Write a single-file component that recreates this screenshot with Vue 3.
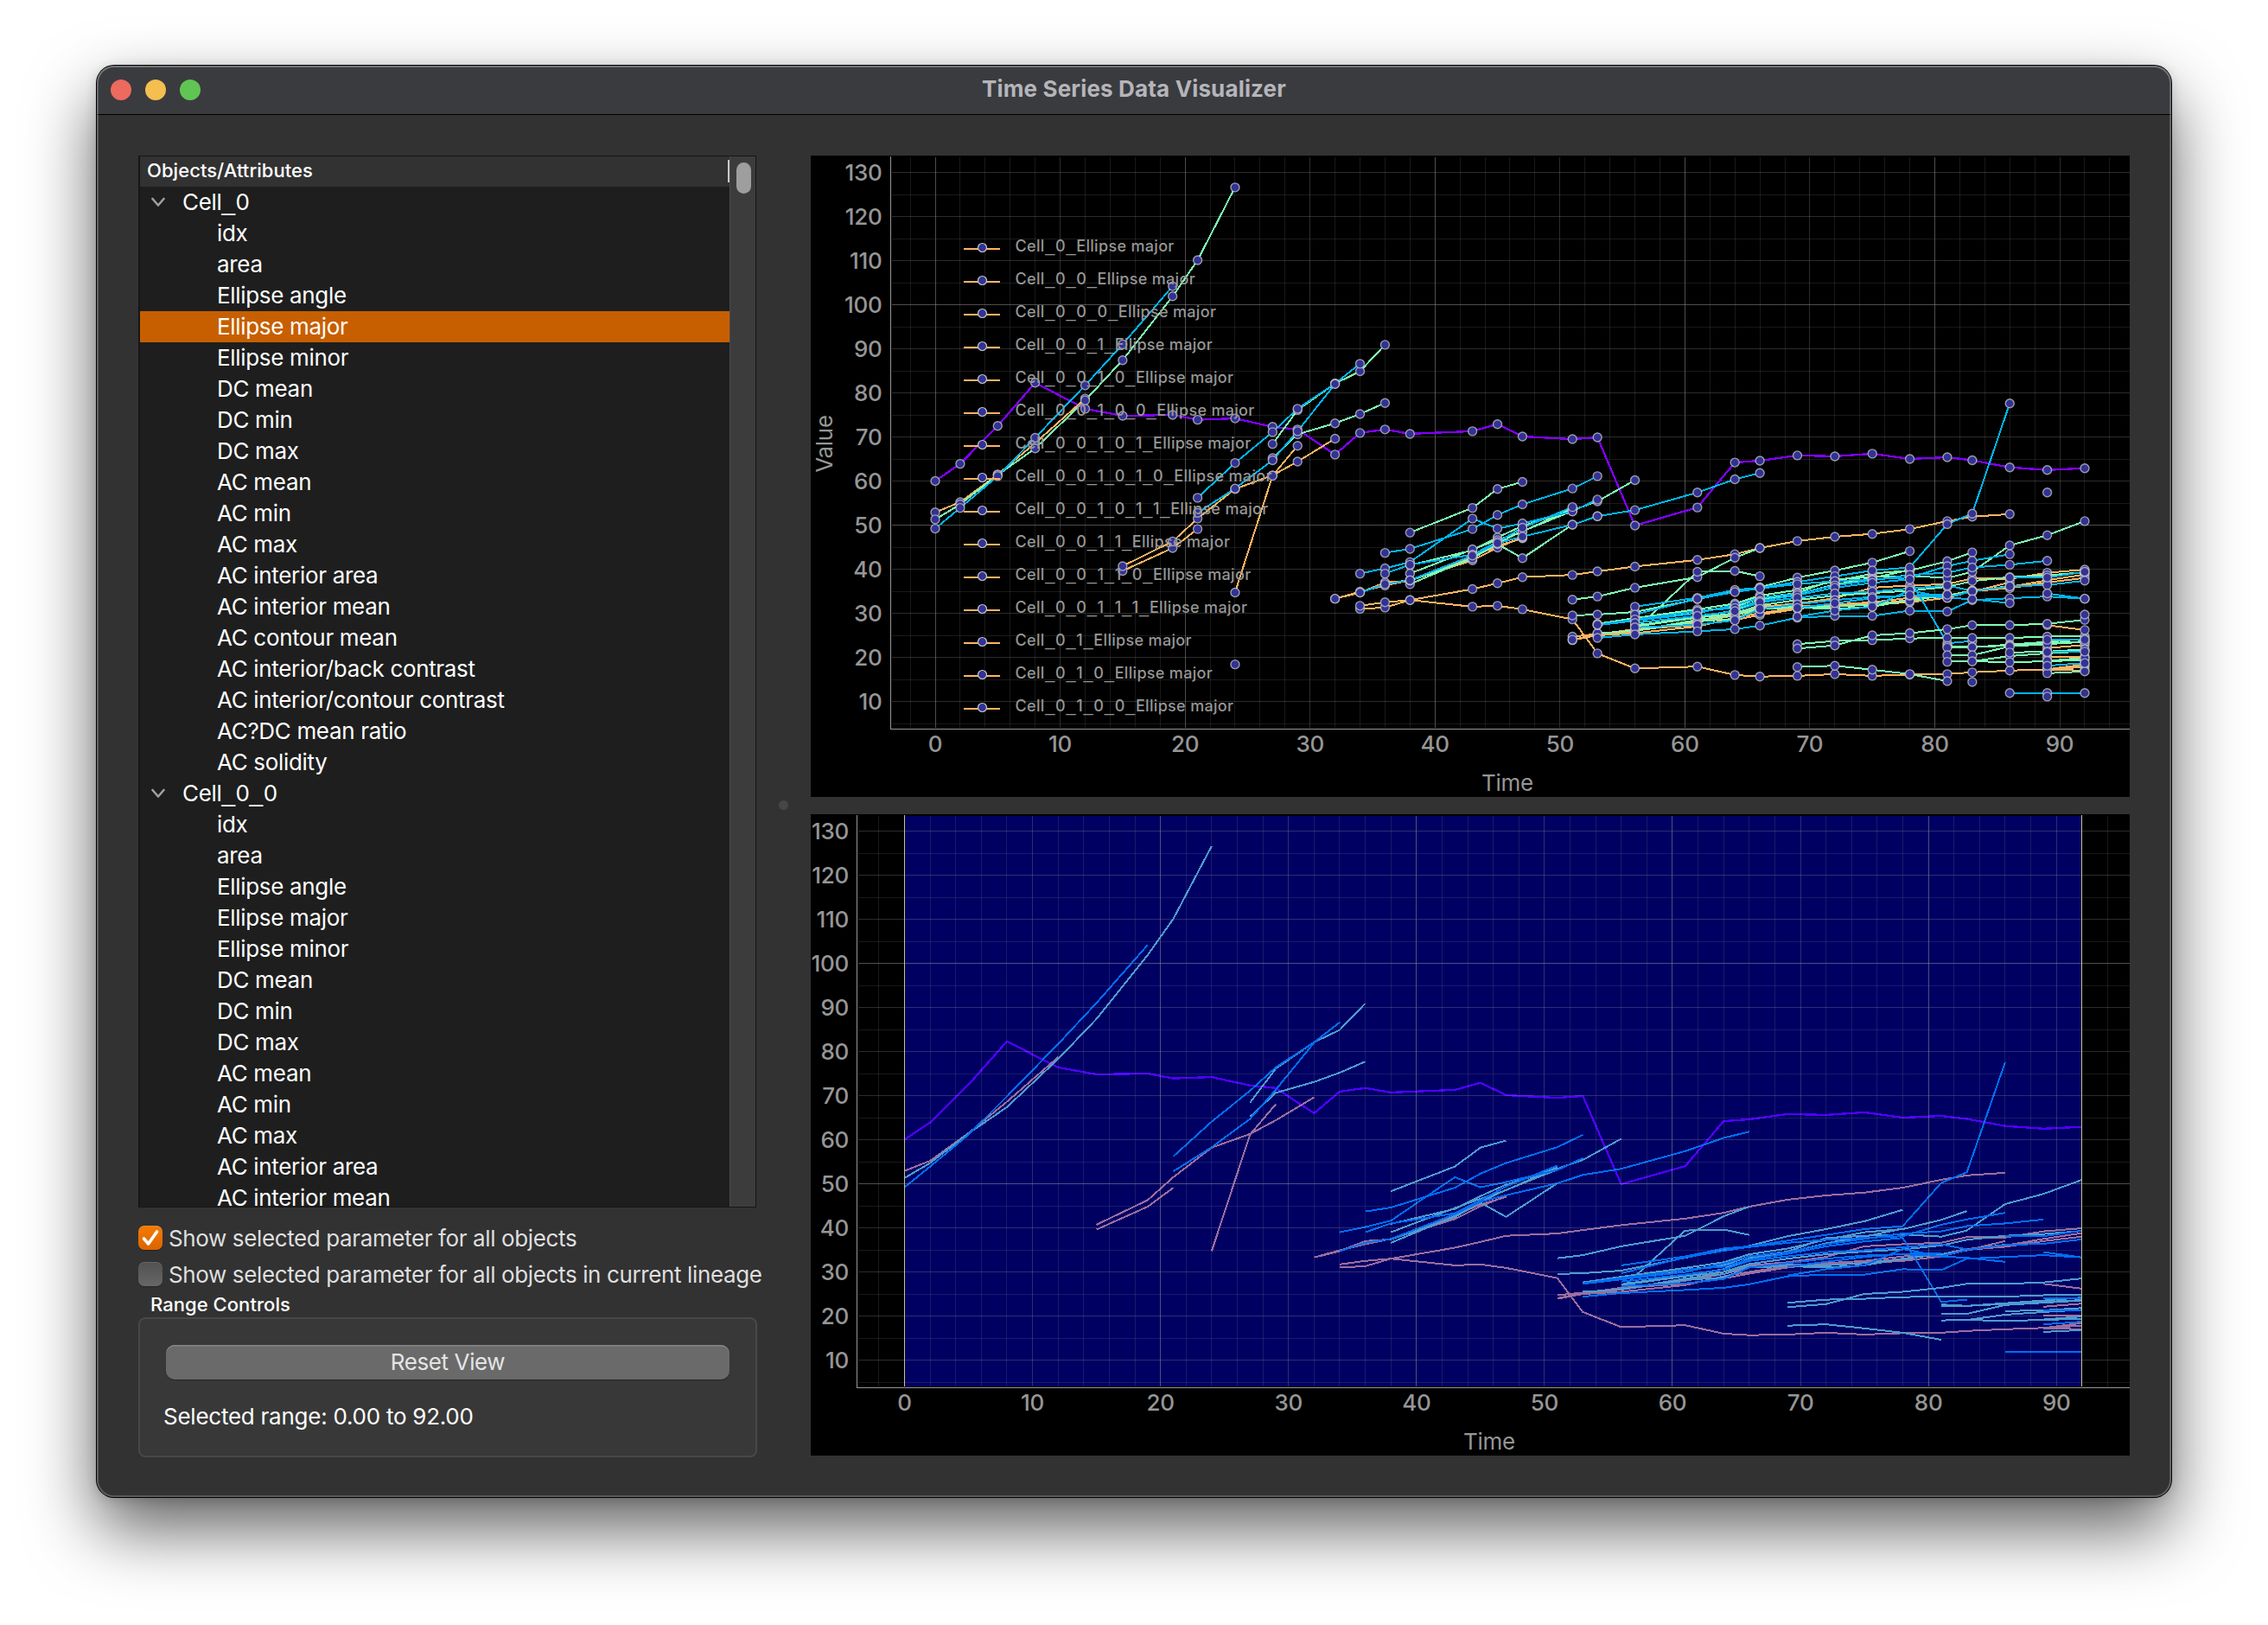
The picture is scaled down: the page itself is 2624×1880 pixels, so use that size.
<script setup>
const attributes = [
  'idx', 'area', 'Ellipse angle', 'Ellipse major', 'Ellipse minor', 'DC mean', 'DC min', 'DC max',
  'AC mean', 'AC min', 'AC max', 'AC interior area', 'AC interior mean', 'AC contour mean',
  'AC interior/back contrast', 'AC interior/contour contrast', 'AC?DC mean ratio', 'AC solidity',
]
// Underscores are set in a wider face, so names are split around them.
const pieces = (text) => text.split(/(_)/)
const rows = [
  { label: 'Cell_0', parent: true },
  ...attributes.map((label) => ({ label, selected: label === 'Ellipse major' })),
  { label: 'Cell_0_0', parent: true },
  ...attributes.slice(0, 13).map((label) => ({ label })),
]

const legend = ['0', '0_0', '0_0_0', '0_0_1', '0_0_1_0', '0_0_1_0_0', '0_0_1_0_1', '0_0_1_0_1_0',
  '0_0_1_0_1_1', '0_0_1_1', '0_0_1_1_0', '0_0_1_1_1', '0_1', '0_1_0', '0_1_0_0']
  .map((id) => `Cell_${id}_Ellipse major`)

// Acquisition frames; each series starts at one of them and continues on the following ones.
const frames = [0, 2, 5, 8, 12, 15, 19, 21, 24, 27, 29, 32, 34, 36, 38, 43, 45, 47, 51, 53, 56, 61, 64, 66, 69, 72, 75, 78, 81, 83, 86, 89, 92]
const P = '#8000ff'
const O = '#ffb462'
const G = '#80ffb4'
const B = '#00b4ec'
const raw = [
  [P, 0, [60, 63.9, 72.5, 82.3, 76.4, 74.8, 75, 73.9, 74.2, 72.3, 71.7, 66, 70.9, 71.7, 70.7, 71.3, 72.9, 70.1, 69.5, 69.9, 49.9, 54, 64.2, 64.6, 65.8, 65.6, 66.2, 65, 65.4, 64.7, 63.1, 62.5, 62.9]],
  [O, 0, [52.9, 55.2, 61.5, 68.6, 78.7]],
  [G, 0, [51.3, 54.7, 61.4, 67.4, 78.3, 87.4, 101.9, 110.1, 126.6]],
  [B, 0, [49.2, 53.9, 61.1, 69.8, 81.7, 91, 104.2]],
  [O, 15, [39.6, 44.8, 49.1]],
  [O, 15, [40.7, 46.3, 51.5, 58.2, 61.3, 64.4, 69.6]],
  [O, 24, [34.7, 61.2, 68]],
  [G, 24, [18.4]],
  [G, 27, [68.4, 76.1, 82.1, 84.9, 90.9]],
  [G, 27, [65.2, 70.6, 73.1, 75.2, 77.7]],
  [B, 21, [56.2, 64.1, 71.1, 76.4, 82.1, 86.6]],
  [B, 21, [52.8, 58.3, 64.7, 71.3, 82]],
  [O, 34, [31, 31.3, 33, 35.5, 36.8, 38.2, 38.7, 39.5, 40.6, 42.1, 43.4, 44.8, 46.4, 47.35, 48, 49.1, 50.9, 51.9, 52.5]],
  [O, 34, [31.7, 32.5, 33, 31.5, 31.7, 30.9, 28.6, 20.9, 17.5, 17.9, 16, 15.65, 15.8, 16.2, 15.8, 16.1, 16.2, 16.6, 17, 17.3, 17.8]],
  [O, 32, [33.3, 34.7, 37, 37.4, 42.8, 45.3, 47]],
  [O, 32, [33.3, 34.9, 36.3, 37.5, 42, 44.9, 47.2]],
  [G, 38, [48.3, 53.9, 58.2, 59.8]],
  [G, 38, [40.9, 44.3, 47.2, 49.8, 53.4, 55.4, 60.2]],
  [G, 38, [39, 44.5, 46.6, 48.5, 53.8]],
  [G, 38, [36.6, 42.6, 45.7, 42.5, 50.1, 52]],
  [G, 38, [37.4, 42.4, 45.9, 48.6, 53.2]],
  [B, 36, [43.7, 44.6, 49.1, 52.3, 54.7, 58.3, 61.1]],
  [B, 34, [39, 40.2, 41.6, 51.5, 49.2, 50.4, 53.1, 55.8]],
  [B, 36, [39, 41, 43.3, 46.2, 49.4, 54.1]],
  [B, 34, [34.7, 36.6, 37.5, 43.1, 45.9, 47.4, 50.1, 52, 53.4, 57.4, 60.4, 61.8]],
  [O, 51, [24.7, 25.3, 26, 28.3, 30, 31.5, 32.2, 33.4, 35.8, 36.3, 36.6, 37.9, 37.8, 39.2, 39.9]],
  [O, 51, [23.9, 25, 26, 28, 29.5, 31, 31.7, 31.6, 32.1, 33, 34, 35.2, 36, 37.5, 38.8]],
  [O, 51, [24, 25.2, 26.4, 27.3, 28.5, 29.6, 31, 32, 32.5, 33.5, 34, 34.9, 37]],
  [O, 53, [25, 25.5, 27, 29, 30, 31.3, 31.5, 32, 32.5, 33.5, 35, 35.7, 37, 38]],
  [G, 51, [33.1, 33.8, 35.8, 38.2, 42.6, 44.8]],
  [G, 56, [26.2, 39.4, 39.6, 38.4]],
  [G, 51, [29.5, 29.7, 30.3, 33.2, 35, 35.9, 38.1, 39.7, 41.5, 44.1]],
  [G, 53, [27.6, 28.9, 30.9, 32.2, 34, 35.3, 37.3, 39, 39.7, 41.8, 43.8]],
  [G, 56, [28.3, 30.5, 31.5, 33.5, 34.6, 37.7, 38.2, 38.5, 38, 39.4, 45.4, 47.7, 50.9]],
  [G, 56, [27.2, 29.2, 30.6, 33.1, 34.4, 36.5, 38, 39.8]],
  [G, 53, [25.5, 26, 28.2, 28.7, 31, 31.3, 31, 31.5, 33, 34, 35, 36.2]],
  [G, 56, [26, 28.5, 29.5, 31.3, 31.5, 31.5, 32, 32.8, 34.2]],
  [G, 56, [27, 29, 30, 31.8, 33, 34, 34.6, 35.1, 36, 37.3, 38.2, 38.6, 39.3]],
  [B, 56, [31.5, 33.5, 35.3, 35.8, 37.1, 38.4, 39.7, 40.4, 50.2, 52.6, 77.6]],
  [B, 56, [29.7, 33.3, 34.8, 35.65, 36.6, 37.3, 37.7, 38.1, 40.7, 41.9, 43.4]],
  [B, 53, [27.3, 28.3, 30, 31.9, 33.5, 34.5, 36.3, 37.5, 38.7, 39.2, 40.4, 41, 41.9]],
  [B, 53, [27.4, 28.6, 30.5, 31.2, 32.8, 34.1, 35.8, 36.9, 37.7, 23.2, 23.7]],
  [B, 56, [27.8, 29.4, 30.5, 32.5, 33.5, 34.5, 34.9, 35.6, 36.3, 35.1]],
  [B, 56, [26.8, 27.4, 28.4, 31, 32, 33, 33.7, 34, 33.6, 35, 36.1, 36.4, 37.4]],
  [B, 53, [24.4, 25.2, 25.9, 26.4, 27.2, 29, 29.4, 29.4, 30.6, 30.4, 33, 33.4, 33.8, 33.3]],
  [B, 69, [29.2, 30.6, 31.5, 35.2, 33.5, 33.2, 32.3]],
  [B, 69, [31.2, 32.3, 33.4, 34.1, 34.2]],
  [B, 89, [34.5, 33.3]],
  [B, 86, [38.1, 38.1, 39.4]],
  [G, 89, [57.4]],
  [G, 69, [23, 23.7, 23.9, 24.3, 24.4, 24.4, 24.4, 24.7, 24.8]],
  [O, 89, [27.3, 26.2]],
  [G, 69, [22, 22.7, 25, 25.5, 26.4, 27.3, 27.3, 27.6, 28.5]],
  [G, 92, [29.7]],
  [G, 69, [17.8, 18.1, 17.2, 16.2, 14.6]],
  [G, 83, [14.4]],
  [O, 89, [22.1, 22.8]],
  [O, 89, [20, 20.2]],
  [O, 89, [17.3, 18.4]],
  [O, 89, [17.2, 17]],
  [G, 81, [22.6, 22.3, 22.9, 23.5, 24.2]],
  [G, 81, [22.2, 22.3, 22.7, 23.2, 23.6]],
  [G, 81, [20.5, 20.5, 22.5, 23, 23.5]],
  [G, 81, [19, 19.1, 20.3, 20.9, 21.4]],
  [G, 83, [19.1, 18.9, 19.1, 19.4]],
  [G, 86, [21.1, 21.3, 21.8]],
  [G, 89, [19.2, 19.9]],
  [G, 89, [16.4, 16.8]],
  [B, 89, [24, 24]],
  [B, 89, [21.2, 21.3]],
  [B, 89, [18.1, 18.7]],
  [B, 86, [11.9, 11.9, 11.9]],
  [G, 89, [11.1]],
]
const series = raw.map(([color, start, values]) => {
  const first = frames.indexOf(start)
  return { color, points: values.map((v, i) => [frames[first + i], v]) }
})

const W = 1526
const H = 742
const sy = (v) => 682.5 - 5.1 * v
const makeScale = (x0, unit) => (t) => x0 + unit * t
const snap = (n) => Math.floor(n) + 0.5
const charts = [
  { id: 'main', axis: 92.5, sx: makeScale(144, 14.456), timeX: 806, labelX: 82.5, main: true },
  { id: 'range', axis: 53.5, sx: makeScale(108.5, 14.808), timeX: 785, labelX: 44 },
].map((c) => {
  const grid = []
  for (let t = -4; t <= 96; t += 2) {
    const x = snap(c.sx(t))
    if (x > c.axis + 1 && x < W) grid.push({ x1: x, x2: x, y1: 2, y2: 662, level: t % 20 === 0 ? 3 : t % 10 === 0 ? 2 : 1 })
  }
  for (let v = 5; v <= 130; v += 5) {
    const y = snap(sy(v))
    grid.push({ x1: c.axis + 1.5, x2: W, y1: y, y2: y, level: v % 50 === 0 ? 3 : v % 10 === 0 ? 2 : 1 })
  }
  return {
    ...c,
    grid,
    lines: series.filter((s) => s.points.length > 1).map((s) => ({
      color: s.color,
      points: s.points.map(([t, v]) => `${c.sx(t).toFixed(1)},${sy(v).toFixed(1)}`).join(' '),
    })),
    dots: c.main ? series.flatMap((s) => s.points.map(([t, v]) => [c.sx(t), sy(v)])) : [],
  }
})
const xTicks = [0, 10, 20, 30, 40, 50, 60, 70, 80, 90]
const yTicks = [10, 20, 30, 40, 50, 60, 70, 80, 90, 100, 110, 120, 130]
</script>

<template>
  <div class="desktop">
    <main class="window">
      <header class="titlebar">
        <div class="lights"><i class="red"></i><i class="yellow"></i><i class="green"></i></div>
        <h1>Time Series Data Visualizer</h1>
      </header>
      <div class="content">
        <aside class="sidebar">
          <section class="tree">
            <div class="tree-main">
              <div class="tree-head"><span>Objects/Attributes</span><i></i></div>
              <ul>
                <li v-for="(row, i) in rows" :key="i" :class="{ parent: row.parent, selected: row.selected }">
                  <svg v-if="row.parent" width="16" height="12" viewBox="0 0 16 12"><path d="M1.5 2 8 9.5 14.5 2" /></svg>
                  <span><span v-for="(s, k) in pieces(row.label)" :key="k" :class="{ under: s === '_' }">{{ s }}</span></span>
                </li>
              </ul>
            </div>
            <div class="scrollbar"><i></i></div>
          </section>
          <label class="check on">
            <span class="box"><svg viewBox="0 0 28 28"><path d="M6.5 15 11.7 21 21.5 7" /></svg></span>
            <span>Show selected parameter for all objects</span>
          </label>
          <label class="check">
            <span class="box"></span>
            <span>Show selected parameter for all objects in current lineage</span>
          </label>
          <h2>Range Controls</h2>
          <section class="group">
            <button>Reset View</button>
            <p>Selected range: 0.00 to 92.00</p>
          </section>
        </aside>
        <div class="splitter"><i></i></div>
        <section class="plots">
          <svg v-for="c in charts" :key="c.id" class="chart" :class="c.id" :width="W" :height="H" :viewBox="`0 0 ${W} ${H}`">
            <g v-if="c.main" class="grid">
              <line v-for="(g, i) in c.grid" :key="i" :class="`g${g.level}`" :x1="g.x1" :x2="g.x2" :y1="g.y1" :y2="g.y2" />
            </g>
            <g class="curves">
              <polyline v-for="(l, i) in c.lines" :key="i" :points="l.points" :stroke="l.color" :class="{ bold: i === 0 }" />
            </g>
            <g v-if="!c.main">
              <rect class="region" x="108.5" y="2" width="1362.5" height="660" />
              <g class="grid">
                <line v-for="(g, i) in c.grid" :key="i" :class="`g${g.level}`" :x1="g.x1" :x2="g.x2" :y1="g.y1" :y2="g.y2" />
              </g>
              <path class="bounds" d="M108.5 1V662M1470.5 1V662" />
            </g>
            <g class="dots">
              <circle v-for="(d, i) in c.dots" :key="i" :cx="d[0]" :cy="d[1]" r="5" />
            </g>
            <path class="axes" :d="`M${c.axis} 1V663.5H${W}`" />
            <g class="ticks">
              <text v-for="v in yTicks" :key="v" :x="c.labelX" :y="sy(v) + 9" text-anchor="end">{{ v }}</text>
              <text v-for="t in xTicks" :key="t" :x="c.sx(t)" y="690" text-anchor="middle">{{ t }}</text>
              <text class="axis-title" :x="c.timeX" y="734.5" text-anchor="middle">Time</text>
              <text v-if="c.main" class="axis-title" transform="translate(25 333.5) rotate(-90)" text-anchor="middle">Value</text>
            </g>
            <g v-if="c.main" class="legend">
              <g v-for="(name, i) in legend" :key="name" :transform="`translate(177 ${106 + i * 38})`">
                <path d="M0 2H42" />
                <circle cx="21.5" cy="0.5" r="5" />
                <text x="59.5" y="5"><tspan v-for="(s, k) in pieces(name)" :key="k" :class="{ under: s === '_' }" :dx="s === '_' ? 0.5 : 0">{{ s }}</tspan></text>
              </g>
            </g>
          </svg>
        </section>
      </div>
    </main>
  </div>
</template>

<style>
body {
  background: #fff;
}
</style>

<style scoped>
.desktop {
  box-sizing: border-box;
  width: 2624px;
  height: 1880px;
  padding: 76px 112px 148px;
  overflow: hidden;
  background: #fff;
  font-family: Inter, 'Liberation Sans', sans-serif;
  font-size: 26px;
  letter-spacing: -0.4px;
  color: #fff;
}
.window {
  position: relative;
  display: flex;
  flex-direction: column;
  height: 1656px;
  border-radius: 20px;
  background: #323232;
  box-shadow: 0 0 0 1px #000, 0 2px 14px rgba(0, 0, 0, 0.16), 0 36px 80px rgba(0, 0, 0, 0.63);
}
.window::after {
  content: '';
  position: absolute;
  inset: 0;
  border-radius: 20px;
  box-shadow: inset 0 0 0 2px rgba(255, 255, 255, 0.2), inset 0 1px 0 1px rgba(255, 255, 255, 0.12);
  pointer-events: none;
}
.titlebar {
  display: grid;
  flex: none;
  grid-template-columns: 1fr auto 1fr;
  align-items: center;
  box-sizing: border-box;
  height: 57px;
  padding: 0 16px;
  border-bottom: 1px solid #000;
  border-radius: 20px 20px 0 0;
  background: #3a3b3f;
}
.lights {
  display: flex;
  gap: 16px;
}
.lights i {
  width: 24px;
  height: 24px;
  border-radius: 50%;
}
.red { background: #ec6a5e; }
.yellow { background: #f4bf4f; }
.green { background: #61c554; }
h1 {
  margin: 0;
  font-size: 26px;
  font-weight: 700;
  letter-spacing: 0.15px;
  color: #b5b5ba;
  line-height: 30px;
  padding-bottom: 3px;
}
.content {
  display: flex;
  flex: 1;
  padding: 47px 48px 46px;
}
.sidebar {
  display: flex;
  flex-direction: column;
  width: 715px;
}
.tree {
  display: flex;
  flex: none;
  box-sizing: border-box;
  height: 1217px;
  border: 1px solid #161616;
  border-left-width: 2px;
  background: #1e1e1e;
  overflow: hidden;
}
.tree-main {
  width: 682px;
}
.tree-head {
  display: flex;
  align-items: center;
  justify-content: space-between;
  height: 35px;
  padding-left: 8px;
  background: #323232;
  font-size: 22px;
  font-weight: 500;
  letter-spacing: 0.05px;
}
.tree-head span {
  padding-bottom: 3px;
}
.tree-head i {
  width: 2px;
  height: 26px;
  margin-bottom: 1px;
  background: #c8c8c8;
}
ul {
  margin: 0;
  padding: 0;
  list-style: none;
}
li {
  display: flex;
  align-items: center;
  height: 36px;
  padding-left: 89px;
  line-height: 36px;
  letter-spacing: -0.33px;
}
li.parent {
  gap: 20px;
  padding-left: 13px;
}
li.selected {
  background: #c75f00;
}
li .under {
  font-family: 'Liberation Sans', sans-serif;
  font-size: 28px;
  letter-spacing: 0.5px;
  line-height: 1;
}
li svg path {
  fill: none;
  stroke: #a0a0a0;
  stroke-width: 2.6;
  stroke-linecap: round;
  stroke-linejoin: round;
}
.scrollbar {
  flex: 1;
  padding: 7px 0 0 7px;
  border-left: 1px solid #4a4a4a;
  background: #3c3c3c;
}
.scrollbar i {
  display: block;
  width: 17px;
  height: 36px;
  border-radius: 9px;
  background: #9e9e9e;
}
.check {
  display: flex;
  align-items: center;
  gap: 7px;
  height: 28px;
  margin-top: 14px;
  color: #dfdfdf;
  letter-spacing: -0.38px;
  white-space: nowrap;
}
.check.on {
  margin-top: 21px;
}
.box {
  flex: none;
  width: 28px;
  height: 28px;
  border-radius: 7px;
  background: linear-gradient(#515151, #676767);
  box-shadow: 0 1px 1px rgba(0, 0, 0, 0.3), inset 0 1px 0 rgba(255, 255, 255, 0.12);
}
.on .box {
  background: linear-gradient(#f77a05, #d96500);
}
.box svg {
  display: block;
}
.box path {
  fill: none;
  stroke: #fff;
  stroke-width: 3.6;
  stroke-linecap: round;
  stroke-linejoin: round;
}
h2 {
  margin: 6px 0 0 14px;
  height: 30px;
  font-size: 22px;
  font-weight: 500;
  line-height: 30px;
  letter-spacing: 0.05px;
}
.group {
  box-sizing: border-box;
  width: 716px;
  height: 162px;
  padding: 30px;
  border: 2px solid #484848;
  border-radius: 8px;
  background: #383838;
}
button {
  display: block;
  width: 652px;
  height: 40px;
  padding: 0 0 2px;
  border: 0;
  border-radius: 10px;
  background: #6a6a6a;
  box-shadow: inset 0 1.5px 0 #868686, 0 1px 1px rgba(0, 0, 0, 0.35);
  font: inherit;
  letter-spacing: inherit;
  color: #e4e4e4;
}
p {
  margin: 27px 0 0 -3px;
  line-height: 32px;
  letter-spacing: -0.25px;
}
.splitter {
  display: flex;
  align-items: center;
  justify-content: center;
  box-sizing: border-box;
  width: 63px;
  padding-bottom: 3px;
}
.splitter i {
  width: 11px;
  height: 11px;
  border-radius: 50%;
  background: #464646;
}
.plots {
  display: flex;
  flex-direction: column;
  gap: 20px;
}
.chart {
  display: block;
  background: #000;
}
.grid line {
  stroke: #969696;
  shape-rendering: crispEdges;
}
.g1 { stroke-opacity: 0.17; }
.g2 { stroke-opacity: 0.29; }
.g3 { stroke-opacity: 0.52; }
.curves polyline {
  fill: none;
  stroke-width: 2;
  shape-rendering: crispEdges;
}
.curves .bold {
  stroke-width: 2.3;
}
.region {
  fill: rgba(0, 0, 255, 0.39);
}
.bounds {
  fill: none;
  stroke: #c8c878;
  shape-rendering: crispEdges;
}
.dots circle {
  fill: #323296;
  stroke: rgba(200, 200, 200, 0.75);
  stroke-width: 1.4;
}
.axes {
  fill: none;
  stroke: #969696;
  shape-rendering: crispEdges;
}
.ticks text {
  fill: #969696;
  font-size: 26px;
  font-weight: 500;
  letter-spacing: -0.3px;
}
.ticks .axis-title {
  font-weight: 400;
}
.legend path {
  stroke: #ffb462;
  stroke-width: 2;
}
.legend circle {
  fill: #323296;
  stroke: #c8c8c8;
  stroke-width: 1.2;
}
.legend text {
  fill: #969696;
  font-size: 18px;
  font-weight: 500;
  letter-spacing: 0.32px;
}
.legend .under {
  font-family: 'Liberation Sans', sans-serif;
  font-size: 20px;
  font-weight: 400;
  letter-spacing: 0.7px;
}
</style>
